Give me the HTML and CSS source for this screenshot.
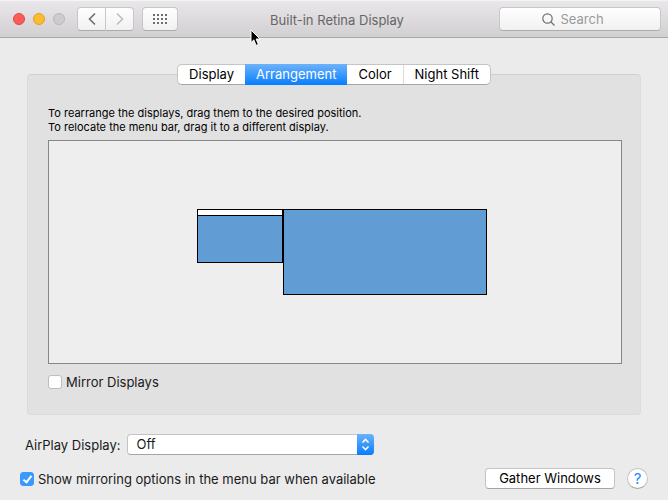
FILE: index.html
```html
<!DOCTYPE html>
<html lang="en">
<head>
  <meta charset="UTF-8">
  <meta name="viewport" content="width=device-width, initial-scale=1">
  <title>Built-in Retina Display</title>
  <link rel="stylesheet" href="styles.css">
</head>
<body>
  <div class="window">
    <header class="toolbar">
      <div class="toolbar-left">
        <div class="lights">
          <button class="light close" aria-label="Close"></button>
          <button class="light minimize" aria-label="Minimize"></button>
          <button class="light zoom" aria-label="Zoom" disabled></button>
        </div>
        <div class="nav">
          <button class="tool back" aria-label="Back">
            <svg width="8" height="14" viewBox="0 0 8 14"><path d="M7 1.5L1.5 7L7 12.5"/></svg>
          </button>
          <button class="tool forward" aria-label="Forward" disabled>
            <svg width="8" height="14" viewBox="0 0 8 14"><path d="M1 1.5L6.5 7L1 12.5"/></svg>
          </button>
        </div>
        <button class="tool show-all" aria-label="Show All">
          <svg width="14" height="10" viewBox="0 0 14 10">
            <path d="M0 1H14M0 5H14M0 9H14" stroke-dasharray="2 2"/>
          </svg>
        </button>
      </div>
      <h1>Built-in Retina Display</h1>
      <label class="search">
        <svg width="13" height="13" viewBox="0 0 13 13"><circle cx="5.5" cy="5.5" r="4.7"/><path d="M9 9L12.5 12.5"/></svg>
        <input type="text" placeholder="Search" aria-label="Search">
      </label>
    </header>

    <main>
      <div class="tabs" role="tablist">
        <button role="tab">Display</button>
        <button role="tab" class="active" aria-selected="true">Arrangement</button>
        <button role="tab">Color</button>
        <button role="tab">Night Shift</button>
      </div>

      <section class="panel">
        <p class="hint">To rearrange the displays, drag them to the desired position.<br>
          To relocate the menu bar, drag it to a different display.</p>
        <div class="canvas">
          <div class="screen built-in"><div class="menu-bar"></div></div>
          <div class="screen external"></div>
        </div>
        <label class="check">
          <input type="checkbox">
          Mirror Displays
        </label>
      </section>

      <div class="airplay">
        <label for="airplay">AirPlay Display:</label>
        <div class="popup">
          <select id="airplay">
            <option>Off</option>
          </select>
          <svg width="17" height="21" viewBox="0 0 17 21"><path d="M5.5 8.5L8.5 5.5L11.5 8.5M5.5 12.5L8.5 15.5L11.5 12.5"/></svg>
        </div>
      </div>

      <footer>
        <label class="check">
          <input type="checkbox" checked>
          Show mirroring options in the menu bar when available
        </label>
        <button class="gather">Gather Windows</button>
        <button class="help" aria-label="Help">?</button>
      </footer>
    </main>

    <svg class="cursor" width="12" height="18" viewBox="0 0 12 18">
      <path d="M1 1V13.5L3.8 10.9L6.1 16.4L8.4 15.4L6.1 10H10Z"/>
    </svg>
  </div>
</body>
</html>
```
FILE: styles.css
```css
*, *::after { box-sizing: border-box; }

body {
  margin: 0;
  background: #ebebeb;
  color: #1a1a1a;
  font-family: Inter, "Liberation Sans", sans-serif;
  font-size: 13px;
  line-height: 16px;
}

button, input, select {
  font: inherit;
  color: inherit;
  margin: 0;
}

button {
  padding: 0;
  border: none;
}

svg {
  fill: none;
  display: block;
}

.window {
  position: relative;
  min-height: 100vh;
}

.toolbar {
  display: grid;
  grid-template-columns: 1fr auto 1fr;
  align-items: center;
  height: 38px;
  padding: 0 7px 0 13px;
  background: linear-gradient(#e9e7e9, #d1cfd1);
  border-top: 1px solid #f5f4f5;
  border-bottom: 1px solid #a9a8a9;
}

.toolbar h1 {
  margin: 0;
  padding-top: 2px;
  font-size: 13px;
  font-weight: 400;
  color: #666;
}

.toolbar-left {
  display: flex;
  align-items: center;
}

.lights {
  display: flex;
  gap: 8px;
  margin-right: 12px;
}

.light {
  width: 12px;
  height: 12px;
  border-radius: 50%;
}

.close { background: #fc5b57; border: 1px solid #e2463f; }
.minimize { background: #fdbc2e; border: 1px solid #dfa023; }
.zoom { background: #cdcccd; border: 1px solid #b9b8b9; }

.nav {
  display: flex;
  margin-right: 8px;
}

.tool {
  display: flex;
  align-items: center;
  justify-content: center;
  width: 29px;
  height: 24px;
  background: linear-gradient(#fefefe, #f1f1f1);
  border: 1px solid #c8c7c8;
  border-bottom-color: #adacad;
  border-radius: 4px;
}

.back { border-radius: 4px 0 0 4px; }
.forward { border-radius: 0 4px 4px 0; border-left: none; width: 28px; }
.show-all { width: 36px; }

.tool svg { stroke: #6e6e6e; stroke-width: 2; }
.back svg { stroke-width: 1.6; }
.forward svg { stroke: #bdbdbd; stroke-width: 1.6; }

.search {
  display: flex;
  align-items: center;
  justify-content: center;
  justify-self: end;
  gap: 6px;
  width: 162px;
  height: 24px;
  background: linear-gradient(#fefefe, #f1f1f1);
  border: 1px solid #c8c7c8;
  border-bottom-color: #adacad;
  border-radius: 4px;
}

.search svg { stroke: #707070; stroke-width: 1.2; }

.search input {
  width: 58px;
  padding: 0;
  border: none;
  outline: none;
  background: none;
}

.search input::placeholder { color: #9a9a9a; opacity: 1; }

main {
  padding: 26px 20px 0;
}

.tabs {
  position: relative;
  display: flex;
  width: fit-content;
  margin: 0 auto -11px;
  background: #fff;
  border: 1px solid #c4c4c4;
  border-bottom-color: #a5a5a5;
  border-radius: 5px;
}

.tabs button {
  height: 19px;
  padding: 0 11px 2px;
  background: none;
  color: #000;
}

.tabs button + button { border-left: 1px solid #dcdcdc; }

.tabs .active,
.tabs .active + button { border-left: none; }

.tabs button.active {
  height: 21px;
  margin: -1px 0;
  background: linear-gradient(#6cb3fa, #087dff);
  color: #fff;
  border: none;
}

.panel {
  margin: 0 7px;
  padding: 31px 18px 24px 20px;
  background: #e1e1e1;
  border: 1px solid #dbdbdb;
  border-top-color: #d0d0d0;
  border-radius: 4px;
}

.hint {
  margin: 0 0 6px;
  font-size: 11px;
  line-height: 14px;
  color: #000;
}

.canvas {
  position: relative;
  height: 224px;
  margin-bottom: 10px;
  background: #eee;
  border: 1px solid #868686;
}

.screen {
  position: absolute;
  top: 68px;
  background: #629cd4;
  border: 1px solid #000;
}

.built-in { left: 148px; width: 86px; height: 54px; }
.external { left: 234px; width: 204px; height: 86px; }

.menu-bar {
  height: 6px;
  background: #fff;
  border-bottom: 1px solid #000;
}

.check {
  display: flex;
  align-items: center;
  gap: 4px;
}

.check input {
  appearance: none;
  width: 14px;
  height: 14px;
  background: #fff;
  border: 1px solid #bdbdbd;
  border-radius: 3px;
}

.check input:checked {
  display: flex;
  justify-content: center;
  padding-top: 1px;
  background: #3b99fc;
  border-color: #3b99fc;
}

.check input:checked::after {
  content: "";
  width: 5px;
  height: 9px;
  border: solid #fff;
  border-width: 0 2px 2px 0;
  transform: rotate(38deg);
}

.airplay {
  display: flex;
  align-items: center;
  gap: 7px;
  margin: 19px 0 13px 5px;
}

.popup {
  position: relative;
  width: 247px;
}

.popup select {
  appearance: none;
  display: block;
  width: 100%;
  height: 21px;
  padding: 0 24px 1px 8px;
  background: #fff;
  border: 1px solid #c4c4c4;
  border-bottom-color: #a5a5a5;
  border-radius: 4px;
}

.popup svg {
  position: absolute;
  top: 0;
  right: 0;
  background: linear-gradient(#6cb3fa, #087dff);
  border-radius: 0 4px 4px 0;
  stroke: #fff;
  stroke-width: 1.6;
  pointer-events: none;
}

footer {
  display: flex;
  align-items: center;
}

.gather {
  width: 130px;
  height: 21px;
  margin: 0 12px 0 auto;
  padding-bottom: 1px;
  background: #fff;
  border: 1px solid #c4c4c4;
  border-bottom-color: #a5a5a5;
  border-radius: 4px;
  color: #000;
}

.help {
  width: 21px;
  height: 21px;
  background: #fff;
  border: 1px solid #c4c4c4;
  border-bottom-color: #a5a5a5;
  border-radius: 50%;
  color: #1a86ff;
  font-size: 15px;
}

.cursor {
  position: absolute;
  left: 250px;
  top: 29px;
  fill: #000;
  stroke: #fff;
  stroke-width: 1;
}
```
